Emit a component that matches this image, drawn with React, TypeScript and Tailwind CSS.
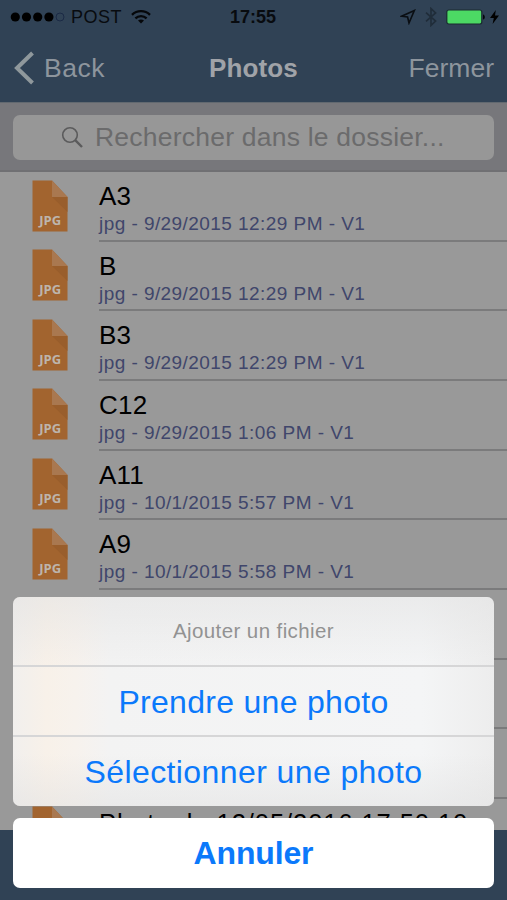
const files = [
  { name: "A3", info: "jpg - 9/29/2015 12:29 PM - V1" },
  { name: "B", info: "jpg - 9/29/2015 12:29 PM - V1" },
  { name: "B3", info: "jpg - 9/29/2015 12:29 PM - V1" },
  { name: "C12", info: "jpg - 9/29/2015 1:06 PM - V1" },
  { name: "A11", info: "jpg - 10/1/2015 5:57 PM - V1" },
  { name: "A9", info: "jpg - 10/1/2015 5:58 PM - V1" },
];

const FileIcon = ({ label = "JPG" }) => (
  <svg width="36" height="52" viewBox="0 0 36 52" className="ml-8 mt-[7.5px] shrink-0">
    <path d="M0.5 0.5H20L35.5 17V51.5H0.5Z" fill="#a2642f" />
    <path d="M20 17H35.5V32Z" fill="#995e2c" />
    <path d="M20 0.5L35.5 17H20Z" fill="#a97850" />
    <text
      x="18.2"
      y="44.6"
      textAnchor="middle"
      fontSize="13"
      fontWeight="700"
      fontFamily="'Open Sans', sans-serif"
      fill="#bdb5ad"
    >
      {label}
    </text>
  </svg>
);

const StatusBar = () => (
  <div className="flex h-[34px] items-center text-black">
    <svg width="56" height="12" viewBox="0 0 56 12" className="ml-[10px]">
      <circle cx="5.3" cy="6" r="4.6" />
      <circle cx="16.5" cy="6" r="4.6" />
      <circle cx="27.7" cy="6" r="4.6" />
      <circle cx="38.9" cy="6" r="4.6" />
      <circle cx="50" cy="6" r="4" fill="none" stroke="#1b2a45" strokeWidth="1" />
    </svg>
    <span className="ml-[5px] w-[60px] text-[18px] tracking-[0.5px] text-[#080b0f]">POST</span>
    <svg width="20" height="16" viewBox="0 0 20 16" fill="none" stroke="#05070a" strokeWidth="2.4">
      <path d="M1 5.8C6 0.9 14 0.9 19 5.8" />
      <path d="M4.4 9.3C7.5 6.4 12.5 6.4 15.6 9.3" />
      <path d="M10 14.5L7 11.6C8.8 10.2 11.2 10.2 13 11.6Z" fill="#05070a" stroke="none" />
    </svg>
    <span className="ml-[79px] w-[170px] text-[18px] font-bold text-[#080b0f]">17:55</span>
    <svg width="16" height="16" viewBox="0 0 16 16" fill="none" stroke="#0a0e13" strokeWidth="1.6">
      <path d="M14.4 1.4L1.6 7.2L7.6 8L9 14Z" />
    </svg>
    <svg
      width="12"
      height="20"
      viewBox="0 0 12 20"
      fill="none"
      stroke="#202d3a"
      strokeWidth="1.7"
      className="ml-[9px]"
    >
      <path d="M1 5.6L10.6 14L6 18.4V1.6L10.6 6L1 14.4" />
    </svg>
    <svg width="40" height="16" viewBox="0 0 40 16" className="ml-[9px]">
      <rect x="0.8" y="1" width="35" height="14" rx="2" fill="#4cd964" stroke="#1a2b30" strokeWidth="1.2" />
      <path d="M37 5.4C39.4 6 39.4 10 37 10.6Z" fill="#05070a" />
    </svg>
    <svg width="9" height="14" viewBox="0 0 9 14" className="ml-[4px]">
      <path d="M5.8 0L0 8H3.8L2.6 14L9 5.6H5Z" />
    </svg>
  </div>
);

export default function App() {
  return (
    <div className="relative h-[900px] w-[507px] overflow-hidden bg-[#999999] font-['Liberation_Sans',Arial,sans-serif]">
      <header className="h-[102px] bg-[#304255]">
        <StatusBar />
        <div className="flex h-[68px] items-center text-[26.5px] leading-none text-[#8d959d]">
          <div className="flex w-[209px] items-center">
            <svg
              width="22"
              height="34"
              viewBox="0 0 22 34"
              fill="none"
              stroke="#8f989c"
              strokeWidth="4"
              className="ml-[13px] mr-[9px]"
            >
              <path d="M19.5 2L4 17L19.5 32" />
            </svg>
            <span className="tracking-[0.5px]">Back</span>
          </div>
          <h1 className="font-bold text-[#a0a3a8] text-[26px] tracking-[0.1px]">Photos</h1>
          <span className="ml-auto mr-[13px]">Fermer</span>
        </div>
      </header>

      <div className="h-[70px] border-b-2 border-t border-b-[#707073] border-t-[#626970] bg-[#77777b] px-[13px] pt-[12px]">
        <div className="flex h-[44.5px] items-center rounded-[7px] bg-[#979797] text-[#6b6b6c]">
          <svg
            width="23"
            height="23"
            viewBox="0 0 23 23"
            fill="none"
            stroke="#5b5b5c"
            className="ml-[48px]"
          >
            <circle cx="9" cy="9" r="7.3" strokeWidth="1.6" />
            <path d="M14.2 14.2L21 21" strokeWidth="2.4" />
          </svg>
          <span className="ml-[11px] pt-[2px] text-[26.5px] tracking-[0.22px]">Rechercher dans le dossier...</span>
        </div>
      </div>

      <ul className="h-[658px] overflow-hidden">
        {files.map((file) => (
          <li key={file.name} className="flex h-[69.67px]">
            <FileIcon />
            <div className="ml-[31px] flex-1 border-b-2 border-[#7b7b7c] pt-[9px]">
              <p className="h-[30px] text-[26px] leading-[30px] tracking-[0.2px] text-black">{file.name}</p>
              <p className="text-[19px] leading-[26px] tracking-[0.44px] text-[#40466b]">{file.info}</p>
            </div>
          </li>
        ))}
        {/* rows under the action sheet */}
        {[6, 7, 8].map((row) => (
          <li key={row} className="ml-[99px] h-[69.67px] border-b-2 border-[#7b7b7c]" />
        ))}
        <li className="flex">
          <FileIcon label="" />
          <p className="ml-[31px] whitespace-nowrap pt-[9px] text-[25.5px] leading-[30px] tracking-[0.93px] text-black">
            Photo du 12/05/2016 17.50.10
          </p>
        </li>
      </ul>
      <footer className="h-[70px] bg-[#304255]" />

      <div className="absolute inset-x-[13px] bottom-[12.5px] text-center text-[#0b79fb]">
        <div className="mb-[12.5px] overflow-hidden rounded-[7px] bg-[linear-gradient(90deg,#f1efed_0%,#f8f1e9_7%,#f7f2ed_13%,#f3f3f3_20%,#f4f5f6_85%,#ededed_100%)]">
          <div className="bg-[linear-gradient(180deg,rgba(225,225,225,0.5),rgba(245,245,245,0)_35%,rgba(245,245,245,0)_75%,rgba(225,225,225,0.5))]">
            <p className="h-[70px] border-b-2 border-[#d6d6d7] text-[20.5px] leading-[68px] tracking-[0.4px] text-[#929292]">
              Ajouter un fichier
            </p>
            <button className="block h-[70px] w-full border-b-2 border-[#d6d6d7] text-[32px] leading-[70px] tracking-[0.3px]">
              Prendre une photo
            </button>
            <button className="block h-[68.5px] w-full text-[32px] leading-[70px] tracking-[0.4px]">
              Sélectionner une photo
            </button>
          </div>
        </div>
        <button className="block h-[69.5px] w-full rounded-[7px] bg-white text-[32px] font-bold leading-[71px] tracking-[-0.15px]">
          Annuler
        </button>
      </div>
    </div>
  );
}
